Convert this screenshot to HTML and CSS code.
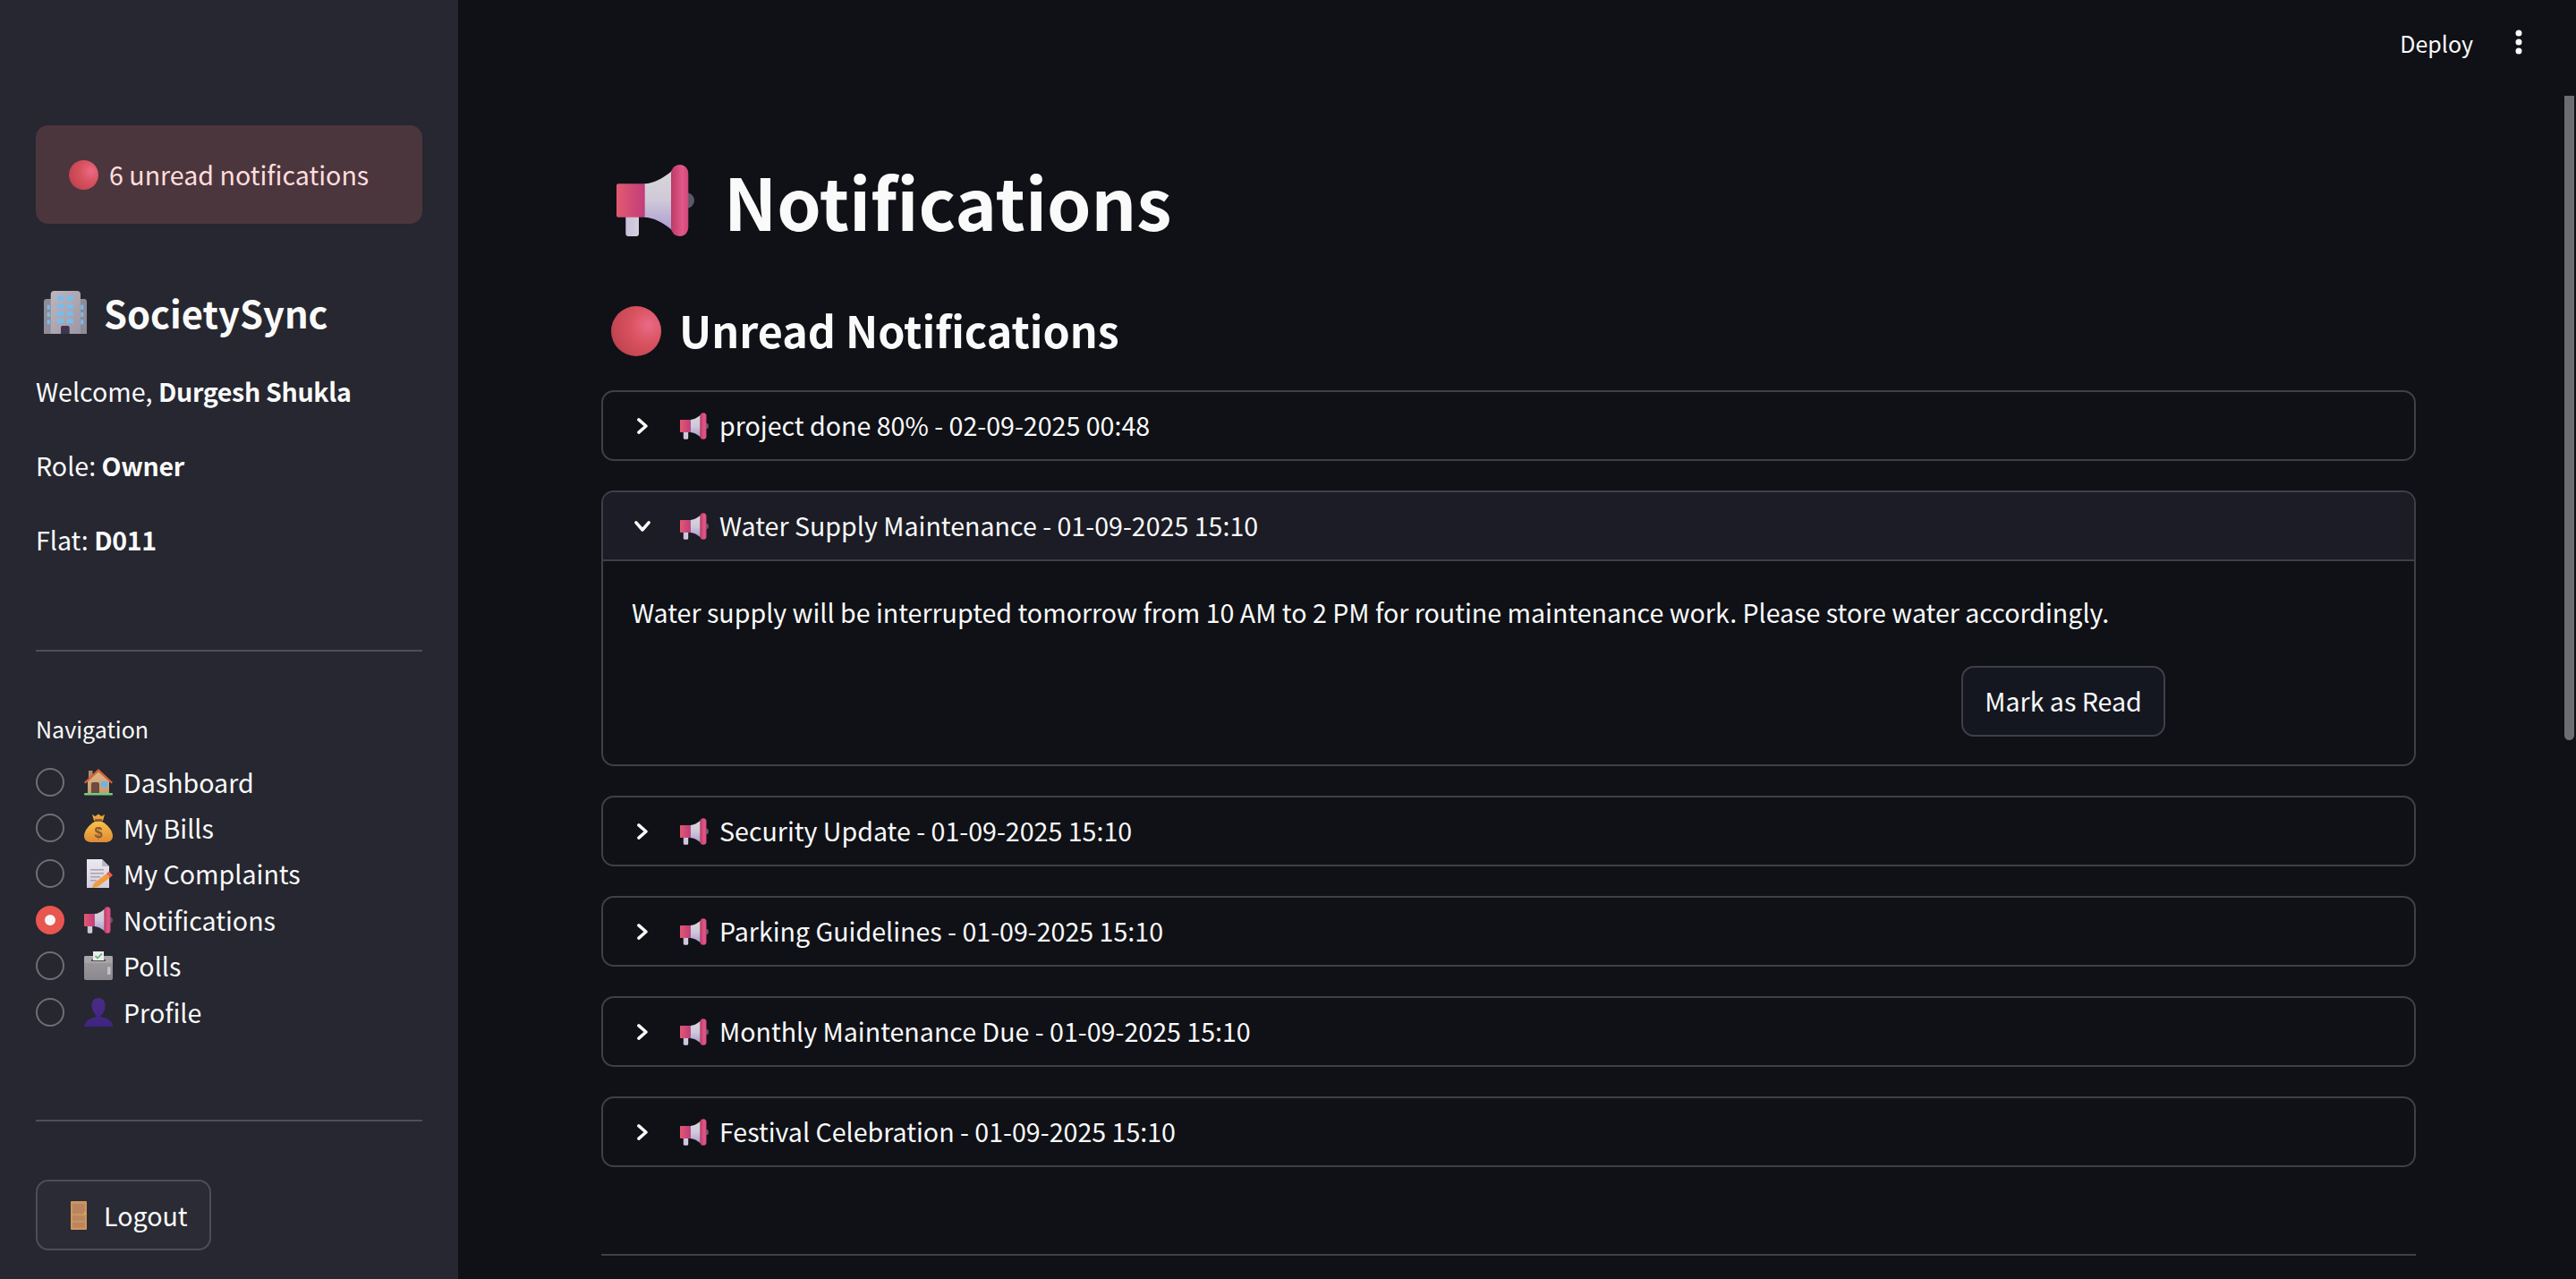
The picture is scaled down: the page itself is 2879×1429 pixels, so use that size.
FILE: index.html
```html
<!DOCTYPE html>
<html lang="en">
<head>
<meta charset="utf-8">
<title>Notifications</title>
<link rel="stylesheet" href="styles.css">
</head>
<body>
<svg class="sprite" aria-hidden="true">
  <defs>
    <linearGradient id="mBody" x1="0" y1="0.5" x2="1" y2="0.5"><stop offset="0" stop-color="#e25a70"/><stop offset="1" stop-color="#c23c7c"/></linearGradient>
    <linearGradient id="mHorn" x1="0.5" y1="0" x2="0.5" y2="1"><stop offset="0" stop-color="#d9d6da"/><stop offset="0.5" stop-color="#cfc9d8"/><stop offset="1" stop-color="#ac9bd2"/></linearGradient>
    <linearGradient id="mCap" x1="0" y1="0.5" x2="1" y2="0.5"><stop offset="0" stop-color="#bd3a66"/><stop offset="0.65" stop-color="#e25886"/><stop offset="1" stop-color="#d0467c"/></linearGradient>
    <linearGradient id="mHandle" x1="0" y1="0" x2="1" y2="0"><stop offset="0" stop-color="#c8c0dc"/><stop offset="1" stop-color="#d6d0dc"/></linearGradient>
    <radialGradient id="redBall" cx="0.75" cy="0.38" r="0.82"><stop offset="0" stop-color="#ea6a87"/><stop offset="0.45" stop-color="#d9525f"/><stop offset="0.85" stop-color="#c64653"/><stop offset="1" stop-color="#b33e4c"/></radialGradient>
    <linearGradient id="bldg" x1="0" y1="0" x2="1" y2="1"><stop offset="0" stop-color="#bdb6bf"/><stop offset="1" stop-color="#9d98a4"/></linearGradient>
    <linearGradient id="bag" x1="0.5" y1="0" x2="0.5" y2="1"><stop offset="0" stop-color="#f6c14c"/><stop offset="1" stop-color="#e08a35"/></linearGradient>
    <linearGradient id="wall" x1="0" y1="0" x2="0" y2="1"><stop offset="0" stop-color="#dcb98a"/><stop offset="1" stop-color="#c99c6c"/></linearGradient>
    <linearGradient id="boxg" x1="0" y1="0" x2="0" y2="1"><stop offset="0" stop-color="#a09da0"/><stop offset="1" stop-color="#8b8790"/></linearGradient>
    <linearGradient id="page" x1="0" y1="0" x2="0" y2="1"><stop offset="0" stop-color="#ece8f0"/><stop offset="1" stop-color="#d4cedc"/></linearGradient>
    <linearGradient id="person" x1="0" y1="0" x2="0" y2="1"><stop offset="0" stop-color="#4a2c86"/><stop offset="1" stop-color="#3f2482"/></linearGradient>

    <symbol id="i-mega" viewBox="0 0 87 80">
      <circle cx="78" cy="40" r="9" fill="#5d5868"/>
      <path d="M10.300 56h14.700v21a3 3 0 0 1-3 3h-8.700a3 3 0 0 1-3-3z" fill="url(#mHandle)"/>
      <path d="M31 21.300C42 21 52 15 62 7v66C52 65 42 59 31 58.700z" fill="url(#mHorn)"/>
      <path d="M2 21.300h29.700v37.400H2a2 2 0 0 1-2-2V23.300a2 2 0 0 1 2-2z" fill="url(#mBody)"/>
      <rect x="61" y="0" width="19.300" height="80" rx="9.650" fill="url(#mCap)"/>
    </symbol>

    <symbol id="i-red" viewBox="0 0 32 32">
      <circle cx="16" cy="16" r="16" fill="url(#redBall)"/>
    </symbol>

    <symbol id="i-bldg" viewBox="0 0 48 48">
      <path d="M0 48V12a3 3 0 0 1 3-3h42a3 3 0 0 1 3 3v36z" fill="#8f8b97"/>
      <path d="M7.700 48V4a4 4 0 0 1 4-4h25.300a4 4 0 0 1 4 4v44z" fill="url(#bldg)"/>
      <g fill="#76bdf0">
        <rect x="3.700" y="15.700" width="3" height="5"/><rect x="3.700" y="24" width="3" height="5"/><rect x="3.700" y="32.300" width="3" height="5"/>
        <rect x="41.300" y="15.700" width="3" height="5"/><rect x="41.300" y="24" width="3" height="5"/><rect x="41.300" y="32.300" width="3" height="5"/>
        <rect x="15" y="5.700" width="7" height="5"/><rect x="25.300" y="5.700" width="7.500" height="5"/>
        <rect x="15" y="14.700" width="7" height="4.700"/><rect x="25.300" y="14.700" width="7.500" height="4.700"/>
        <rect x="15" y="23" width="7" height="4.700"/><rect x="25.300" y="23" width="7.500" height="4.700"/>
        <rect x="15" y="31.300" width="7" height="4.700"/><rect x="25.300" y="31.300" width="7.500" height="4.700"/>
      </g>
      <path d="M19 48v-7a2 2 0 0 1 2-2h5.700a2 2 0 0 1 2 2v7z" fill="#40344e"/>
    </symbol>

    <symbol id="i-house" viewBox="0 0 32 30">
      <rect x="5" y="2" width="4.500" height="10" fill="#b58a5e"/>
      <path d="M4 13L16 2l12 11v14H4z" fill="url(#wall)"/>
      <path d="M0 15L16 0l16 15-1.500 1.500L16 3.500 1.500 16.500z" fill="#d4603e"/>
      <path d="M8 27V17a2 2 0 0 1 2-2h5a2 2 0 0 1 2 2v10z" fill="#6e4a40"/>
      <rect x="19" y="14" width="7" height="6.500" rx="0.500" fill="#68b5ee"/>
      <rect x="0" y="27" width="32" height="2.500" rx="1" fill="#6fce7f"/>
    </symbol>

    <symbol id="i-bag" viewBox="0 0 32 32">
      <path d="M9 1l3.500 2L16 .5 19.500 3 23 1l-2 7h-10z" fill="#eca23a"/>
      <rect x="12" y="6" width="8" height="4" fill="#8c5a34"/>
      <path d="M12 9h8c6 3 12 10 12 16 0 5-4 7-8 7H8c-4 0-8-2-8-7C0 19 6 12 12 9z" fill="url(#bag)"/>
      <text x="16" y="27" class="bag-sign">$</text>
    </symbol>

    <symbol id="i-doc" viewBox="0 0 32 32">
      <path d="M3 0h17l8 8v24H3z" fill="url(#page)"/>
      <path d="M20 0l8 8h-8z" fill="#bdb6c8"/>
      <g fill="#a8a2b0"><rect x="7" y="11" width="15" height="1.500"/><rect x="7" y="15" width="15" height="1.500"/><rect x="7" y="19" width="11" height="1.500"/><rect x="7" y="23" width="7" height="1.500"/></g>
      <path d="M9 32l2-5 14-11 4 4.500L15 31z" fill="#ef9d3e"/>
      <path d="M25 16l3-2.500 4 4.500-3 2.500z" fill="#e8604f"/>
    </symbol>

    <symbol id="i-box" viewBox="0 0 32 32">
      <rect x="0" y="5" width="32" height="27" rx="2" fill="url(#boxg)"/>
      <rect x="0" y="5" width="32" height="8" rx="2" fill="#a8a5a8"/>
      <rect x="8" y="9" width="16" height="2" fill="#56525c"/>
      <path d="M10 0h12v10H10z" fill="#eeeaf0"/>
      <path d="M12.500 5l2.500 2.500 5-5" fill="none" stroke="#5fc474" stroke-width="1.800"/>
      <rect x="26" y="17" width="3.500" height="9" rx="1.500" fill="#c4c2c6"/>
    </symbol>

    <symbol id="i-person" viewBox="0 0 32 32">
      <path d="M8.500 8c0-5 3-8 7.500-8s7.500 3 7.500 8c0 2-.3 3-.5 4 .8 1 0 2.500-1 2.500-.5 3-2.500 5-3.500 5.500v1c6 1 13 4 14 11H0c1-7 8-10 14-11v-1c-1-.5-3.200-2.500-3.700-5.500-1 0-1.800-1.500-.8-2.500-.7-1-1-2-1-4z" fill="url(#person)"/>
    </symbol>

    <symbol id="i-door" viewBox="0 0 18 32">
      <rect x="0" y="0" width="18" height="32" rx="0.800" fill="#cc955f"/>
      <rect x="2" y="3" width="13.700" height="11" fill="#b98660"/>
      <rect x="2" y="16.300" width="13.700" height="5.400" fill="#b98660"/>
      <rect x="2" y="23.700" width="13.700" height="6" fill="#b98660"/>
      <circle cx="15.700" cy="13.700" r="1.100" fill="#eeb04a"/>
    </symbol>

    <symbol id="i-right" viewBox="0 0 12 18">
      <path d="M1.900 1.900L10 9l-8.100 7.100" fill="none" stroke="currentColor" stroke-width="3.500" stroke-linecap="round" stroke-linejoin="round"/>
    </symbol>
    <symbol id="i-down" viewBox="0 0 18 12">
      <path d="M1.900 1.900L9 10l7.100-8.100" fill="none" stroke="currentColor" stroke-width="3.500" stroke-linecap="round" stroke-linejoin="round"/>
    </symbol>
  </defs>
</svg>

<div class="app">
  <aside class="sidebar">
    <div class="alert">
      <svg class="ico-alert"><use href="#i-red"/></svg>
      <span>6 unread notifications</span>
    </div>
    <h3 class="brand">
      <svg class="ico-brand"><use href="#i-bldg"/></svg>
      <span>SocietySync</span>
    </h3>
    <p class="meta">Welcome, <strong>Durgesh Shukla</strong></p>
    <p class="meta">Role: <strong>Owner</strong></p>
    <p class="meta">Flat: <strong>D011</strong></p>
    <hr class="side-rule first">
    <div class="nav-label">Navigation</div>
    <ul class="radio-list">
      <li class="radio-row"><span class="radio"></span><svg class="ico"><use href="#i-house"/></svg><span>Dashboard</span></li>
      <li class="radio-row"><span class="radio"></span><svg class="ico"><use href="#i-bag"/></svg><span>My Bills</span></li>
      <li class="radio-row"><span class="radio"></span><svg class="ico"><use href="#i-doc"/></svg><span>My Complaints</span></li>
      <li class="radio-row"><span class="radio is-on"></span><svg class="ico"><use href="#i-mega"/></svg><span>Notifications</span></li>
      <li class="radio-row"><span class="radio"></span><svg class="ico"><use href="#i-box"/></svg><span>Polls</span></li>
      <li class="radio-row"><span class="radio"></span><svg class="ico"><use href="#i-person"/></svg><span>Profile</span></li>
    </ul>
    <hr class="side-rule second">
    <button class="btn logout"><svg class="ico-door"><use href="#i-door"/></svg><span>Logout</span></button>
  </aside>

  <main class="main">
    <div class="scroll-thumb"></div>
    <header class="toolbar">
      <span class="deploy">Deploy</span>
      <svg class="kebab" viewBox="0 0 8 28"><circle cx="4" cy="4" r="3.500"/><circle cx="4" cy="14" r="3.500"/><circle cx="4" cy="24" r="3.500"/></svg>
    </header>
    <div class="content">
      <h1 class="title"><svg class="ico-title"><use href="#i-mega"/></svg><span>Notifications</span></h1>
      <h2 class="subtitle"><svg class="ico-sub"><use href="#i-red"/></svg><span>Unread Notifications</span></h2>

      <section class="expander">
        <div class="exp-head"><svg class="chev-r"><use href="#i-right"/></svg><svg class="ico"><use href="#i-mega"/></svg><span>project done 80% - 02-09-2025 00:48</span></div>
      </section>
      <section class="expander">
        <div class="exp-head is-open"><svg class="chev-d"><use href="#i-down"/></svg><svg class="ico"><use href="#i-mega"/></svg><span>Water Supply Maintenance - 01-09-2025 15:10</span></div>
        <div class="exp-body">
          <p class="exp-text">Water supply will be interrupted tomorrow from 10 AM to 2 PM for routine maintenance work. Please store water accordingly.</p>
          <div class="exp-actions"><button class="btn mark">Mark as Read</button></div>
        </div>
      </section>
      <section class="expander">
        <div class="exp-head"><svg class="chev-r"><use href="#i-right"/></svg><svg class="ico"><use href="#i-mega"/></svg><span>Security Update - 01-09-2025 15:10</span></div>
      </section>
      <section class="expander">
        <div class="exp-head"><svg class="chev-r"><use href="#i-right"/></svg><svg class="ico"><use href="#i-mega"/></svg><span>Parking Guidelines - 01-09-2025 15:10</span></div>
      </section>
      <section class="expander">
        <div class="exp-head"><svg class="chev-r"><use href="#i-right"/></svg><svg class="ico"><use href="#i-mega"/></svg><span>Monthly Maintenance Due - 01-09-2025 15:10</span></div>
      </section>
      <section class="expander">
        <div class="exp-head"><svg class="chev-r"><use href="#i-right"/></svg><svg class="ico"><use href="#i-mega"/></svg><span>Festival Celebration - 01-09-2025 15:10</span></div>
      </section>
      <hr class="main-rule">
    </div>
  </main>
</div>
</body>
</html>
```

FILE: styles.css
```css
* { box-sizing: border-box; }
html, body { margin: 0; height: 100%; overflow: hidden; background: #0f1116; }
body {
  font-family: "Noto Sans CJK SC", "Noto Sans", sans-serif;
  font-size: 28.600px;
  line-height: 1.4;
  color: #fafafa;
}
.sprite { width: 0; height: 0; position: absolute; }
.bag-sign { font-family: "Liberation Sans", sans-serif; font-size: 16px; font-weight: 700; fill: #8a5530; text-anchor: middle; }

.app { display: grid; grid-template-columns: 512px 1fr; height: 1429px; overflow: hidden; }

/* Sidebar */
.sidebar { background: #262730; padding: 140px 40px 0; display: flex; flex-direction: column; align-items: stretch; }
.alert {
  height: 110px; background: #4c363d; border-radius: 14px; color: #ffdede;
  display: flex; align-items: center; gap: 12px; padding-left: 37px; margin-bottom: 65px;
}
.ico-alert { width: 33px; height: 33px; flex: none; }
.brand { margin: 0 0 33px; display: flex; align-items: center; gap: 19px; font-size: 41.700px; font-weight: 700; line-height: 68px; padding-left: 9px; }
.ico-brand { width: 48px; height: 48px; flex: none; }
.meta { margin: 0 0 42px; line-height: 41px; }
.meta strong { font-weight: 700; letter-spacing: -0.350px; }
.side-rule { border: 0; height: 2px; background: #4e4f58; margin: 0; }
.side-rule.first { margin-top: 61px; }
.nav-label { font-size: 25px; margin-top: 68px; line-height: 36px; }
.radio-list { list-style: none; margin: 16px 0 0; padding: 0; }
.radio-row { display: flex; align-items: center; height: 51.400px; }
.radio { width: 32px; height: 32px; border-radius: 50%; border: 2.500px solid #6e6f74; flex: none; margin-right: 22px; }
.radio.is-on { border: 10px solid #e8564f; background: #f6f6f8; }
.ico { width: 32px; height: 32px; flex: none; margin-right: 12px; }
.side-rule.second { margin-top: 95px; }
.btn { font: inherit; color: #fafafa; border: 2px solid #4c4d56; border-radius: 14px; background: transparent; display: inline-flex; align-items: center; justify-content: center; }
.logout { margin-top: 65px; width: 196px; height: 79px; align-self: flex-start; background: #2a2b34; justify-content: flex-start; padding: 0 0 0 37px; }
.ico-door { width: 18px; height: 32px; margin-right: 19px; flex: none; }

/* Main */
.main { position: relative; min-width: 0; background: #0f1116; }
.scroll-thumb { position: absolute; right: 2px; top: 107px; width: 11px; height: 720px; border-radius: 0 0 6px 6px; background: #6c6d71; }
.toolbar { height: 96px; display: flex; align-items: flex-start; justify-content: flex-end; padding: 28px 60px 0 0; gap: 47px; }
.deploy { font-size: 25px; line-height: 40px; }
.kebab { width: 8px; height: 28px; fill: #fafafa; margin-top: 5px; }
.content { padding: 0 179px 0 160px; }
.title { margin: 78px 0 0; font-size: 79.200px; font-weight: 700; line-height: 100px; display: flex; align-items: center; gap: 33px; padding-left: 17px; }
.ico-title { width: 87px; height: 80px; flex: none; }
.subtitle { margin: 58px 0 32px; font-size: 48.400px; font-weight: 700; line-height: 72px; display: flex; align-items: center; gap: 20px; padding-left: 11px; }
.ico-sub { width: 56px; height: 56px; flex: none; margin-top: 4px; }
.expander { border: 2px solid #3e4045; border-radius: 14px; margin-bottom: 33px; overflow: hidden; }
.exp-head { height: 75px; display: flex; align-items: center; padding-left: 0; }
.exp-head.is-open { height: 77px; background: #1b1c25; border-bottom: 2px solid #3e4045; }
.chev-r { width: 12px; height: 18px; margin: 0 36px 0 38px; flex: none; color: #fafafa; }
.chev-d { width: 18px; height: 12px; margin: 0 33px 0 35px; flex: none; color: #fafafa; }
.exp-head .ico { margin-right: 12px; }
.exp-body { padding: 36px 33px 31px 32px; }
.exp-text { margin: 0 0 40px; line-height: 41px; }
.exp-actions { padding-left: 1486px; }
.mark { width: 228px; height: 79px; background: #141720; border-color: #3e4045; }
.main-rule { border: 0; height: 2px; background: #3e4045; margin: 97px 0 0; }
```
